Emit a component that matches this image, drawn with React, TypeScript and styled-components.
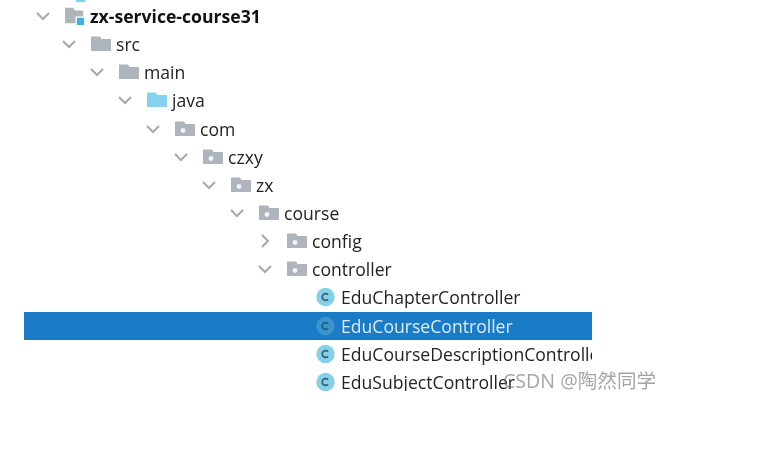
import React from 'react';
import styled, { createGlobalStyle } from 'styled-components';

const GlobalStyle = createGlobalStyle`
  html, body {
    margin: 0;
    padding: 0;
    background: #fff;
  }
`;

const Page = styled.div`
  position: relative;
  width: 771px;
  height: 450px;
  overflow: hidden;
  background: #fff;
  padding-left: 24px;
  box-sizing: border-box;
`;

// 트리 패널
const TreePanel = styled.div`
  width: 568px;
  height: 391px;
  overflow: hidden;
  font-family: 'Open Sans', 'Noto Sans', sans-serif;
  font-size: 17.6px;
  color: #232323;
  filter: blur(0.35px);
`;

const TopSliver = styled.div`
  width: 9px;
  height: 2px;
  margin-left: 52px;
  background: #7fd0ee;
`;

const Row = styled.div<{ $depth: number; $selected?: boolean; $root?: boolean }>`
  display: flex;
  align-items: center;
  height: 28.15px;
  white-space: nowrap;
  padding-left: ${(p) => 10 + 28 * p.$depth + (p.$root ? 2 : 0)}px;
  background: ${(p) => (p.$selected ? '#1a7cc6' : 'transparent')};
  color: ${(p) => (p.$selected ? '#dcecf8' : 'inherit')};
`;

const ChevronSlot = styled.span`
  display: flex;
  align-items: center;
  justify-content: center;
  flex: none;
  width: 14px;
  margin-right: 15px;
`;

const IconSlot = styled.span<{ $gap: number }>`
  display: flex;
  align-items: center;
  flex: none;
  width: 20px;
  margin-right: ${(p) => p.$gap}px;
`;

const Label = styled.span<{ $bold?: boolean }>`
  font-weight: ${(p) => (p.$bold ? 700 : 400)};
  color: ${(p) => (p.$bold ? '#111' : 'inherit')};
`;

const Watermark = styled.div`
  position: absolute;
  left: 503px;
  top: 368px;
  font-family: 'Open Sans', 'Noto Sans CJK SC', sans-serif;
  font-size: 19.6px;
  line-height: 25px;
  color: rgba(110, 110, 110, 0.62);
  white-space: nowrap;
  filter: blur(0.35px);
`;

const Chevron = ({ open }: { open: boolean }) => (
  <svg width="14" height="14" viewBox="0 0 14 14" fill="none">
    <path
      d={open ? 'M1 4l6 6 6-6' : 'M4 1l6 6-6 6'}
      stroke="#a4a9ae"
      strokeWidth="2"
    />
  </svg>
);

const FOLDER = 'M0 0.5h9l1.5 2.5H20v12H0z';

const Folder = ({ kind }: { kind: 'plain' | 'source' | 'package' }) => (
  <svg width="20" height="16" viewBox="0 0 20 16">
    <path d={FOLDER} fill={kind === 'source' ? '#84d1f0' : '#afb5bc'} />
    {kind === 'package' && <circle cx="8" cy="9.5" r="2.4" fill="#f2f4f5" />}
  </svg>
);

const ModuleFolder = () => (
  <svg width="22" height="20" viewBox="0 0 22 20">
    <path d="M0 1h9l2 3h9v14H0z" fill="#afb5bc" />
    <rect x="11.5" y="10.5" width="10" height="9" fill="#fff" />
    <rect x="13" y="12" width="8" height="8" fill="#3fb1e0" />
  </svg>
);

const ClassIcon = ({ selected }: { selected?: boolean }) => (
  <svg width="20" height="20" viewBox="0 0 20 20" fill="none">
    <circle cx="10.5" cy="10" r="9.2" fill={selected ? '#3a95cf' : '#83d0e8'} />
    <path
      d="M13.1 7.7a3.4 3.4 0 1 0 0 4.6"
      stroke={selected ? '#1c5f86' : '#3d5f70'}
      strokeWidth="1.7"
    />
  </svg>
);

type Kind = 'module' | 'plain' | 'source' | 'package' | 'class';

interface Node {
  name: string;
  depth: number;
  kind: Kind;
  chevron?: 'open' | 'closed';
  selected?: boolean;
}

const NODES: Node[] = [
  { name: 'zx-service-course31', depth: 0, kind: 'module', chevron: 'open' },
  { name: 'src', depth: 1, kind: 'plain', chevron: 'open' },
  { name: 'main', depth: 2, kind: 'plain', chevron: 'open' },
  { name: 'java', depth: 3, kind: 'source', chevron: 'open' },
  { name: 'com', depth: 4, kind: 'package', chevron: 'open' },
  { name: 'czxy', depth: 5, kind: 'package', chevron: 'open' },
  { name: 'zx', depth: 6, kind: 'package', chevron: 'open' },
  { name: 'course', depth: 7, kind: 'package', chevron: 'open' },
  { name: 'config', depth: 8, kind: 'package', chevron: 'closed' },
  { name: 'controller', depth: 8, kind: 'package', chevron: 'open' },
  { name: 'EduChapterController', depth: 9, kind: 'class' },
  { name: 'EduCourseController', depth: 9, kind: 'class', selected: true },
  { name: 'EduCourseDescriptionController', depth: 9, kind: 'class' },
  { name: 'EduSubjectController', depth: 9, kind: 'class' },
];

const NodeIcon = ({ node }: { node: Node }) => {
  if (node.kind === 'module') return <ModuleFolder />;
  if (node.kind === 'class') return <ClassIcon selected={node.selected} />;
  return <Folder kind={node.kind} />;
};

const App: React.FC = () => (
  <Page>
    <GlobalStyle />
    <TreePanel>
      <TopSliver />
      {NODES.map((node) => (
        <Row
          key={node.name}
          $depth={node.depth}
          $selected={node.selected}
          $root={node.kind === 'module'}
        >
          <ChevronSlot>
            {node.chevron && <Chevron open={node.chevron === 'open'} />}
          </ChevronSlot>
          <IconSlot $gap={node.kind === 'class' ? 6 : 5}>
            <NodeIcon node={node} />
          </IconSlot>
          <Label $bold={node.kind === 'module'}>{node.name}</Label>
        </Row>
      ))}
    </TreePanel>
    <Watermark>CSDN @陶然同学</Watermark>
  </Page>
);

export default App;
